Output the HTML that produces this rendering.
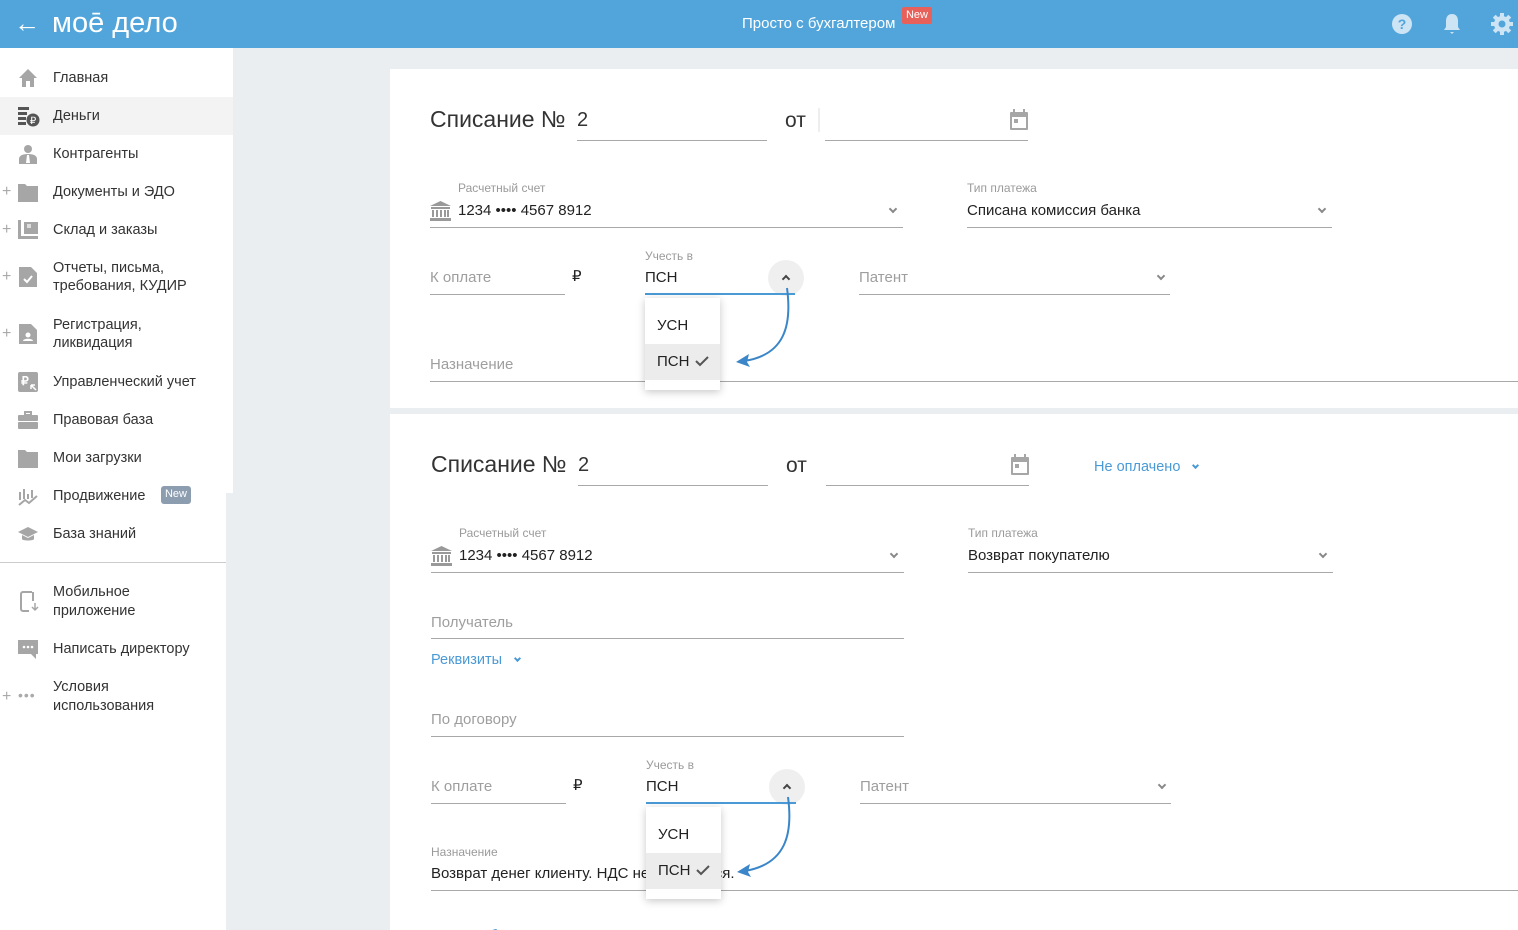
<!DOCTYPE html>
<html><head><meta charset="utf-8">
<style>
*{margin:0;padding:0;box-sizing:border-box}
html,body{width:1518px;height:930px;overflow:hidden}
body{background:#ebeef1;font-family:"Liberation Sans",sans-serif;color:#333;position:relative}
.a{position:absolute}
.t{position:absolute;white-space:nowrap;height:20px;line-height:20px}
.hd{position:absolute;left:0;top:0;width:1518px;height:48px;background:#52a5db}
.side{position:absolute;left:0;top:48px;width:233px;height:445px;background:#fff}
.side2{position:absolute;left:0;top:490px;width:226px;height:440px;background:#fff}
.nav{font-size:14.5px;color:#333}
.plus{position:absolute;left:2px;font-size:16px;color:#aaa;line-height:16px}
.card{position:absolute;left:390px;width:1128px;background:#fff}
.ul{position:absolute;height:1px;background:#a8a8a8}
.lbl{font-size:12px;color:#9a9a9a}
.val{font-size:15px;color:#222}
.ph{font-size:15px;color:#9e9e9e}
.ttl{font-size:23px;color:#333;height:30px;line-height:30px}
.chev{position:absolute;width:6px;height:6px;border-right:2px solid #888;border-bottom:2px solid #888;transform:rotate(45deg)}
.dd{position:absolute;width:75px;height:92px;background:#fff;box-shadow:0 2px 8px rgba(0,0,0,.22)}
.circ{position:absolute;width:36px;height:36px;border-radius:50%;background:#efefef}
.blue{color:#4a9ad6}
</style></head><body>
<div class="hd"></div>
<div class="t" style="left:14px;top:9px;height:28px;line-height:28px;font-size:26px;color:#fff">←</div>
<div class="t" style="left:52px;top:7px;height:32px;line-height:32px;font-size:29px;color:#fff">моē дело</div>
<div class="t" style="left:742px;top:14px;font-size:15px;color:#fff">Просто с бухгалтером</div>
<div class="a" style="left:902px;top:7px;width:30px;height:17px;background:#e8605a;border-radius:2px;color:#fff;font-size:11px;line-height:16px;text-align:center">New</div>
<svg class="a" style="left:1391px;top:13px" width="22" height="22"><circle cx="11" cy="11" r="10" fill="#cde4f5"/><text x="11" y="16" font-size="14" font-weight="bold" text-anchor="middle" fill="#52a5db" font-family="Liberation Sans">?</text></svg>
<svg class="a" style="left:1441px;top:12px" width="22" height="24"><path d="M11 2c-4 0-6 3-6 7v6l-2 3h16l-2-3V9c0-4-2-7-6-7z M9 20h4l-2 2z" fill="#cde4f5"/></svg>
<svg class="a" style="left:1490px;top:12px" width="24" height="24"><g fill="#cde4f5"><circle cx="12" cy="12" r="8"/><rect x="10" y="1" width="4" height="22"/><rect x="1" y="10" width="22" height="4"/><rect x="10" y="1" width="4" height="22" transform="rotate(45 12 12)"/><rect x="10" y="1" width="4" height="22" transform="rotate(-45 12 12)"/></g><circle cx="12" cy="12" r="3.5" fill="#52a5db"/></svg>

<div class="side"></div><div class="side2"></div>
<div class="a" style="left:0;top:97px;width:233px;height:38px;background:#f3f3f3"></div>
<div class="a" style="left:0;top:562px;width:226px;height:1px;background:#ccc"></div>

<svg class="a" style="left:18px;top:68px" width="20" height="20"><path d="M10 1L1 10h3v9h4v-6h4v6h4v-9h3z" fill="#a6a6a6"/></svg>
<div class="t nav" style="left:53px;top:68px">Главная</div>
<svg class="a" style="left:18px;top:106px" width="22" height="22"><g fill="#555"><rect x="0" y="1" width="11" height="3"/><rect x="0" y="6" width="9" height="3"/><rect x="0" y="11" width="8" height="3"/><rect x="0" y="16" width="8" height="3"/><circle cx="15" cy="14" r="6.5"/></g><text x="15" y="18" font-size="10" fill="#fff" text-anchor="middle" font-family="Liberation Sans">₽</text></svg>
<div class="t nav" style="left:53px;top:106px">Деньги</div>
<svg class="a" style="left:18px;top:144px" width="20" height="20"><circle cx="10" cy="5" r="4" fill="#a6a6a6"/><path d="M1 20v-5c0-3 3-5 9-5s9 2 9 5v5z" fill="#a6a6a6"/><path d="M9 11h2l1 8h-4z" fill="#fff"/></svg>
<div class="t nav" style="left:53px;top:144px">Контрагенты</div>
<div class="plus" style="top:184px">+</div>
<svg class="a" style="left:18px;top:182px" width="20" height="20"><path d="M0 2h7l2 2h11v16H0z" fill="#a6a6a6"/></svg>
<div class="t nav" style="left:53px;top:182px">Документы и ЭДО</div>
<div class="plus" style="top:222px">+</div>
<svg class="a" style="left:18px;top:220px" width="20" height="20"><path d="M0 0h3v16h17v3H0z" fill="#a6a6a6"/><rect x="6" y="2" width="14" height="12" fill="#a6a6a6"/><rect x="9" y="4" width="4" height="4" fill="#ddd"/></svg>
<div class="t nav" style="left:53px;top:220px">Склад и заказы</div>
<div class="plus" style="top:269px">+</div>
<svg class="a" style="left:18px;top:267px" width="20" height="20"><path d="M1 0h12l6 6v14H1z" fill="#a6a6a6"/><path d="M6 12l3 3 5-6" stroke="#fff" stroke-width="2" fill="none"/></svg>
<div class="t nav" style="left:53px;top:258px">Отчеты, письма,</div>
<div class="t nav" style="left:53px;top:276px">требования, КУДИР</div>
<div class="plus" style="top:326px">+</div>
<svg class="a" style="left:18px;top:324px" width="20" height="20"><path d="M1 0h12l6 6v14H1z" fill="#a6a6a6"/><circle cx="10" cy="11" r="2.5" fill="#fff"/><path d="M5 17c0-3 10-3 10 0z" fill="#fff"/></svg>
<div class="t nav" style="left:53px;top:315px">Регистрация,</div>
<div class="t nav" style="left:53px;top:333px">ликвидация</div>
<svg class="a" style="left:18px;top:372px" width="20" height="20"><rect width="20" height="20" rx="2" fill="#a6a6a6"/><text x="7" y="13" font-size="12" fill="#fff" text-anchor="middle" font-family="Liberation Sans" font-weight="bold">₽</text><path d="M13 13l5 5M13 13v4M13 13h4" stroke="#fff" stroke-width="1.5"/></svg>
<div class="t nav" style="left:53px;top:372px">Управленческий учет</div>
<svg class="a" style="left:18px;top:410px" width="20" height="20"><path d="M7 2h6v3H7z" fill="none" stroke="#a6a6a6" stroke-width="2"/><rect x="0" y="5" width="20" height="6" rx="1" fill="#a6a6a6"/><rect x="0" y="12" width="20" height="7" rx="1" fill="#a6a6a6"/></svg>
<div class="t nav" style="left:53px;top:410px">Правовая база</div>
<svg class="a" style="left:18px;top:448px" width="20" height="20"><path d="M0 2h7l2 2h11v16H0z" fill="#a6a6a6"/></svg>
<div class="t nav" style="left:53px;top:448px">Мои загрузки</div>
<svg class="a" style="left:18px;top:486px" width="20" height="20"><path d="M2 6v8M6 3v10M10 8v5M14 4v8M1 19l6-5 4 3 8-7" stroke="#a6a6a6" stroke-width="2" fill="none"/></svg>
<div class="t nav" style="left:53px;top:486px">Продвижение</div>
<div class="a" style="left:161px;top:486px;width:30px;height:18px;background:#8d9db0;border-radius:3px;color:#fff;font-size:11px;line-height:17px;text-align:center">New</div>
<svg class="a" style="left:18px;top:524px" width="20" height="20"><path d="M10 3L0 8l10 5 10-5z" fill="#a6a6a6"/><path d="M4 11v4c0 2 12 2 12 0v-4l-6 3z" fill="#a6a6a6"/></svg>
<div class="t nav" style="left:53px;top:524px">База знаний</div>
<svg class="a" style="left:18px;top:590px" width="22" height="22"><path d="M14 2H5a2 2 0 0 0-2 2v15a2 2 0 0 0 2 2h6" fill="none" stroke="#a6a6a6" stroke-width="2"/><path d="M15 2v9" stroke="#a6a6a6" stroke-width="2"/><path d="M17 13v7M14 17l3 3 3-3" stroke="#a6a6a6" stroke-width="1.5" fill="none"/></svg>
<div class="t nav" style="left:53px;top:582px">Мобильное</div>
<div class="t nav" style="left:53px;top:601px">приложение</div>
<svg class="a" style="left:18px;top:639px" width="20" height="22"><path d="M0 1h20v14h-2v5l-5-5H0z" fill="#a6a6a6"/><circle cx="6" cy="8" r="1.3" fill="#fff"/><circle cx="10" cy="8" r="1.3" fill="#fff"/><circle cx="14" cy="8" r="1.3" fill="#fff"/></svg>
<div class="t nav" style="left:53px;top:639px">Написать директору</div>
<div class="plus" style="top:689px">+</div>
<div class="t" style="left:18px;top:685px;font-size:14px;color:#aaa;letter-spacing:1px">•••</div>
<div class="t nav" style="left:53px;top:677px">Условия</div>
<div class="t nav" style="left:53px;top:696px">использования</div>

<!-- card 1 -->
<div class="card" style="top:69px;height:339px"></div>
<div class="t ttl" style="left:430px;top:104px">Списание №</div>
<div class="t" style="left:577px;top:109px;font-size:20px;height:22px;line-height:22px">2</div>
<div class="ul" style="left:577px;top:140px;width:190px"></div>
<div class="t ttl" style="left:785px;top:106px;font-size:21px">от</div>
<div class="a" style="left:818px;top:108px;width:2px;height:24px;background:#eee"></div>
<div class="ul" style="left:825px;top:140px;width:203px"></div>
<svg class="a" style="left:1010px;top:109px" width="18" height="21"><rect x="0" y="3" width="18" height="18" rx="1" fill="#a6a6a6"/><rect x="2" y="8" width="14" height="11" fill="#fff"/><rect x="4" y="10" width="4" height="4" fill="#a6a6a6"/><rect x="3" y="0" width="2" height="4" fill="#a6a6a6"/><rect x="13" y="0" width="2" height="4" fill="#a6a6a6"/></svg>
<div class="t lbl" style="left:458px;top:178px">Расчетный счет</div>
<svg class="a" style="left:430px;top:201px" width="21" height="20"><path d="M10.5 0L0 5h21z" fill="#999"/><rect x="1" y="6" width="19" height="2" fill="#999"/><g fill="#999"><rect x="2" y="9" width="2" height="7"/><rect x="6" y="9" width="2" height="7"/><rect x="10" y="9" width="2" height="7"/><rect x="14" y="9" width="2" height="7"/><rect x="17" y="9" width="2" height="7"/></g><rect x="0" y="17" width="21" height="3" fill="#999"/></svg>
<div class="t val" style="left:458px;top:201px">1234 •••• 4567 8912</div>
<div class="chev" style="left:890px;top:206px"></div>
<div class="ul" style="left:430px;top:227px;width:473px"></div>
<div class="t lbl" style="left:967px;top:178px">Тип платежа</div>
<div class="t val" style="left:967px;top:201px">Списана комиссия банка</div>
<div class="chev" style="left:1319px;top:206px"></div>
<div class="ul" style="left:967px;top:227px;width:365px"></div>
<div class="t ph" style="left:430px;top:268px">К оплате</div>
<div class="ul" style="left:430px;top:294px;width:135px"></div>
<div class="t val" style="left:572px;top:267px">₽</div>
<div class="t lbl" style="left:645px;top:246px">Учесть в</div>
<div class="t val" style="left:645px;top:268px">ПСН</div>
<div class="circ" style="left:768px;top:260px"></div>
<div class="chev" style="left:783px;top:276px;transform:rotate(225deg);border-color:#444"></div>
<div class="a" style="left:645px;top:293px;width:150px;height:2px;background:#4a9ad6"></div>
<div class="t ph" style="left:859px;top:268px">Патент</div>
<div class="chev" style="left:1158px;top:273px"></div>
<div class="ul" style="left:859px;top:294px;width:311px"></div>
<div class="t ph" style="left:430px;top:355px">Назначение</div>
<div class="ul" style="left:430px;top:381px;width:1088px"></div>
<div class="dd" style="left:645px;top:298px"></div>
<div class="t val" style="left:657px;top:316px">УСН</div>
<div class="a" style="left:645px;top:344px;width:75px;height:36px;background:#ececec"></div>
<div class="t val" style="left:657px;top:352px">ПСН</div>
<svg class="a" style="left:695px;top:355px" width="14" height="12"><path d="M1 6l4 4 8-8" stroke="#555" stroke-width="2" fill="none"/></svg>
<svg class="a" style="left:730px;top:285px" width="70" height="90"><path d="M57 3C62 40 55 70 14 76" stroke="#3a86c8" stroke-width="2" fill="none"/><path d="M6 77l13-8-2 8 3 5z" fill="#3a86c8"/></svg>

<!-- card 2 -->
<div class="card" style="top:414px;height:516px"></div>
<div class="t ttl" style="left:431px;top:449px">Списание №</div>
<div class="t" style="left:578px;top:454px;font-size:20px;height:22px;line-height:22px">2</div>
<div class="ul" style="left:578px;top:485px;width:190px"></div>
<div class="t ttl" style="left:786px;top:451px;font-size:21px">от</div>
<div class="ul" style="left:826px;top:485px;width:203px"></div>
<svg class="a" style="left:1011px;top:454px" width="18" height="21"><rect x="0" y="3" width="18" height="18" rx="1" fill="#a6a6a6"/><rect x="2" y="8" width="14" height="11" fill="#fff"/><rect x="4" y="10" width="4" height="4" fill="#a6a6a6"/><rect x="3" y="0" width="2" height="4" fill="#a6a6a6"/><rect x="13" y="0" width="2" height="4" fill="#a6a6a6"/></svg>
<div class="t blue" style="left:1094px;top:457px;font-size:14.5px">Не оплачено</div>
<div class="chev" style="left:1193px;top:463px;width:5px;height:5px;border-color:#4a9ad6"></div>
<div class="t lbl" style="left:459px;top:523px">Расчетный счет</div>
<svg class="a" style="left:431px;top:546px" width="21" height="20"><path d="M10.5 0L0 5h21z" fill="#999"/><rect x="1" y="6" width="19" height="2" fill="#999"/><g fill="#999"><rect x="2" y="9" width="2" height="7"/><rect x="6" y="9" width="2" height="7"/><rect x="10" y="9" width="2" height="7"/><rect x="14" y="9" width="2" height="7"/><rect x="17" y="9" width="2" height="7"/></g><rect x="0" y="17" width="21" height="3" fill="#999"/></svg>
<div class="t val" style="left:459px;top:546px">1234 •••• 4567 8912</div>
<div class="chev" style="left:891px;top:551px"></div>
<div class="ul" style="left:431px;top:572px;width:473px"></div>
<div class="t lbl" style="left:968px;top:523px">Тип платежа</div>
<div class="t val" style="left:968px;top:546px">Возврат покупателю</div>
<div class="chev" style="left:1320px;top:551px"></div>
<div class="ul" style="left:968px;top:572px;width:365px"></div>
<div class="t ph" style="left:431px;top:613px">Получатель</div>
<div class="ul" style="left:431px;top:638px;width:473px"></div>
<div class="t blue" style="left:431px;top:650px;font-size:14.5px">Реквизиты</div>
<div class="chev" style="left:515px;top:656px;width:5px;height:5px;border-color:#4a9ad6"></div>
<div class="t ph" style="left:431px;top:710px">По договору</div>
<div class="ul" style="left:431px;top:736px;width:473px"></div>
<div class="t ph" style="left:431px;top:777px">К оплате</div>
<div class="ul" style="left:431px;top:803px;width:135px"></div>
<div class="t val" style="left:573px;top:776px">₽</div>
<div class="t lbl" style="left:646px;top:755px">Учесть в</div>
<div class="t val" style="left:646px;top:777px">ПСН</div>
<div class="circ" style="left:769px;top:769px"></div>
<div class="chev" style="left:784px;top:785px;transform:rotate(225deg);border-color:#444"></div>
<div class="a" style="left:646px;top:802px;width:150px;height:2px;background:#4a9ad6"></div>
<div class="t ph" style="left:860px;top:777px">Патент</div>
<div class="chev" style="left:1159px;top:782px"></div>
<div class="ul" style="left:860px;top:803px;width:311px"></div>
<div class="t lbl" style="left:431px;top:842px">Назначение</div>
<div class="t val" style="left:431px;top:864px">Возврат денег клиенту. НДС не облагается.</div>
<div class="ul" style="left:431px;top:890px;width:1087px"></div>
<div class="t blue" style="left:431px;top:926px;font-size:14.5px">Ндс не облагается</div>
<div class="dd" style="left:646px;top:807px"></div>
<div class="t val" style="left:658px;top:825px">УСН</div>
<div class="a" style="left:646px;top:853px;width:75px;height:36px;background:#ececec"></div>
<div class="t val" style="left:658px;top:861px">ПСН</div>
<svg class="a" style="left:696px;top:864px" width="14" height="12"><path d="M1 6l4 4 8-8" stroke="#555" stroke-width="2" fill="none"/></svg>
<svg class="a" style="left:731px;top:794px" width="70" height="90"><path d="M57 3C62 40 55 70 14 77" stroke="#3a86c8" stroke-width="2" fill="none"/><path d="M6 78l13-8-2 8 3 5z" fill="#3a86c8"/></svg>
</body></html>
